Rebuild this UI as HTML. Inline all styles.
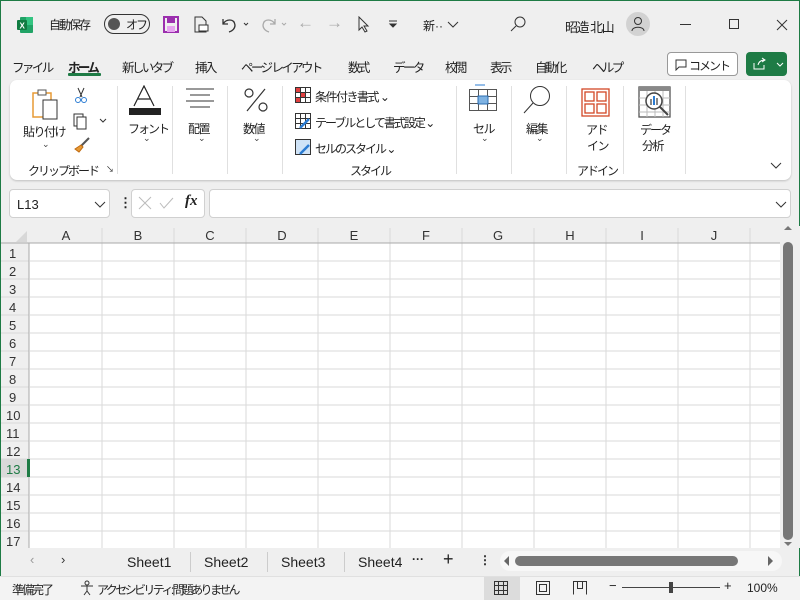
<!DOCTYPE html>
<html><head><meta charset="utf-8"><style>
*{box-sizing:border-box;margin:0;padding:0}
body{width:800px;height:600px;overflow:hidden;background:#efefef;font-family:"Liberation Sans","Noto Sans CJK JP",sans-serif;font-size:12px;color:#222;position:relative}
.a{position:absolute;white-space:nowrap}
.j{letter-spacing:-1.5px}
.win{position:absolute;left:0;top:0;width:800px;height:600px;border:1px solid #1e7b45;border-bottom:none}
.tab{position:absolute;top:57px;font-size:12.5px;letter-spacing:-2.6px}
.sep{position:absolute;top:86px;width:1px;height:88px;background:#e0e0e0}
.lbl{font-size:12px;text-align:center;letter-spacing:-1.5px}
.chev{font-size:9px;color:#444}
</style></head><body>
<div class="win"></div>
<svg class="a" style="left:16px;top:16px" width="18" height="18"><rect x="4" y="1" width="13" height="16" rx="1" fill="#21a366"/><rect x="10" y="1" width="7" height="8" fill="#33c481"/><rect x="1" y="4" width="10" height="10" rx="1" fill="#107c41"/><text x="3.5" y="12.5" font-size="8" fill="#fff" font-weight="bold" font-family="Liberation Sans">X</text></svg>
<div class="a j" style="left:49px;top:16px;font-size:12px;letter-spacing:-2px">自動保存</div>
<div class="a" style="left:104px;top:14px;width:46px;height:20px;border:1px solid #333;border-radius:10px"></div>
<div class="a" style="left:108px;top:18px;width:12px;height:12px;border-radius:6px;background:#555"></div>
<div class="a" style="left:126px;top:16px;font-size:12px;letter-spacing:-2px">オフ</div>
<svg class="a" style="left:163px;top:16px" width="16" height="18"><rect x="1" y="1" width="14" height="15" fill="none" stroke="#9b2fae" stroke-width="2"/><rect x="4" y="2" width="8" height="5" fill="#9b2fae"/><rect x="4" y="10" width="8" height="6" fill="#e7a3f0"/></svg>
<svg class="a" style="left:193px;top:16px" width="16" height="18"><path d="M2 1h7l4 4v11H2z" fill="none" stroke="#333"/><rect x="6" y="9" width="9" height="6" fill="#fff" stroke="#333"/></svg>
<svg class="a" style="left:220px;top:15px" width="30" height="20"><path d="M3 4v5h5M3 9c3-5 11-6 12 1 0 4-3 6-6 7" fill="none" stroke="#333" stroke-width="1.3"/><path d="M24 8l2 2 2-2" fill="none" stroke="#333"/></svg>
<svg class="a" style="left:260px;top:15px" width="30" height="20"><path d="M15 4v5h-5M15 9c-3-5-11-6-12 1 0 4 3 6 6 7" fill="none" stroke="#aaa" stroke-width="1.3"/><path d="M22 8l2 2 2-2" fill="none" stroke="#aaa"/></svg>
<div class="a" style="left:297px;top:13px;font-size:17px;color:#aaa">←</div>
<div class="a" style="left:326px;top:13px;font-size:17px;color:#aaa">→</div>
<svg class="a" style="left:357px;top:16px" width="14" height="18"><path d="M2 1v13l3-3 3 5 2-1-3-5h4z" fill="none" stroke="#333"/></svg>
<svg class="a" style="left:388px;top:20px" width="10" height="10"><path d="M1 1h8M2 4l3 3 3-3z" stroke="#333" fill="#333"/></svg>
<div class="a" style="left:423px;top:17px">新··</div>
<svg class="a" style="left:447px;top:21px" width="12" height="8"><path d="M1 1l5 5 5-5" fill="none" stroke="#333"/></svg>
<svg class="a" style="left:509px;top:15px" width="18" height="18"><circle cx="11" cy="7" r="5" fill="none" stroke="#333"/><path d="M7 11l-5 5" stroke="#333"/></svg>
<div class="a" style="left:565px;top:17px;font-size:13px;letter-spacing:-1.5px">昭造 北山</div>
<div class="a" style="left:626px;top:12px;width:24px;height:24px;border-radius:12px;background:#d2d2d2"></div>
<svg class="a" style="left:630px;top:16px" width="16" height="16"><circle cx="8" cy="5" r="3.5" fill="none" stroke="#333"/><path d="M2 15c0-5 12-5 12 0" fill="none" stroke="#333"/></svg>
<div class="a" style="left:680px;top:24px;width:11px;height:1px;background:#333"></div>
<div class="a" style="left:729px;top:19px;width:10px;height:10px;border:1px solid #333"></div>
<svg class="a" style="left:776px;top:19px" width="12" height="12"><path d="M1 1l10 10M11 1L1 11" stroke="#333"/></svg>
<div class="tab" style="left:12px">ファイル</div>
<div class="tab" style="left:68px;font-weight:bold">ホーム</div>
<div class="a" style="left:68px;top:73px;width:33px;height:3px;background:#1e7b45;border-radius:1px"></div>
<div class="tab" style="left:122px">新しいタブ</div>
<div class="tab" style="left:195px">挿入</div>
<div class="tab" style="left:241px">ページ レイアウト</div>
<div class="tab" style="left:348px">数式</div>
<div class="tab" style="left:393px">データ</div>
<div class="tab" style="left:445px">校閲</div>
<div class="tab" style="left:490px">表示</div>
<div class="tab" style="left:535px">自動化</div>
<div class="tab" style="left:592px">ヘルプ</div>
<div class="a" style="left:667px;top:52px;width:71px;height:24px;border:1px solid #999;border-radius:4px;background:#fff"></div>
<svg class="a" style="left:675px;top:59px" width="12" height="12"><path d="M1 1h10v7H4l-3 3z" fill="none" stroke="#333"/></svg>
<div class="a" style="left:689px;top:57px;font-size:12px;letter-spacing:-2px">コメント</div>
<div class="a" style="left:746px;top:52px;width:41px;height:24px;border-radius:4px;background:#1e7b45"></div>
<svg class="a" style="left:752px;top:57px" width="32" height="14"><path d="M2 6v6h10V8M6 8c1-4 4-5 7-5M10 1l3 2-3 2" fill="none" stroke="#fff"/><path d="M25 6l3 3 3-3" fill="none" stroke="#fff"/></svg>
<div class="a" style="left:10px;top:80px;width:781px;height:100px;background:#fff;border-radius:7px;box-shadow:0 1px 2px rgba(0,0,0,.2)"></div>
<svg class="a" style="left:32px;top:87px" width="30" height="33"><rect x="1" y="6" width="18" height="24" fill="#fff" stroke="#e79a35" stroke-width="1.5"/><rect x="6" y="3" width="8" height="5" fill="#fff" stroke="#555"/><rect x="11" y="13" width="14" height="19" fill="#fff" stroke="#333"/></svg>
<div class="a lbl" style="left:23px;top:123px">貼り付け</div>
<div class="a chev" style="left:42px;top:139px">⌄</div>
<svg class="a" style="left:74px;top:87px" width="14" height="17"><path d="M4 1l4 9M10 1L6 10" stroke="#333"/><circle cx="4" cy="13" r="2.5" fill="none" stroke="#2b7cd3"/><circle cx="10" cy="13" r="2.5" fill="none" stroke="#2b7cd3"/></svg>
<svg class="a" style="left:73px;top:113px" width="34" height="17"><rect x="1" y="1" width="9" height="12" fill="none" stroke="#333"/><rect x="4" y="4" width="9" height="12" fill="#fff" stroke="#333"/><path d="M27 6l3 3 3-3" fill="none" stroke="#333"/></svg>
<svg class="a" style="left:73px;top:137px" width="18" height="16"><path d="M16 1l-8 8" stroke="#555" stroke-width="2"/><path d="M8 8l-6 4 4 3 4-5z" fill="#e79a35" stroke="#c06a10"/></svg>
<div class="a lbl" style="left:28px;top:162px;letter-spacing:-2px">クリップボード</div>
<div class="a" style="left:106px;top:164px;font-size:8px">↘</div>
<div class="sep" style="left:117px"></div>
<svg class="a" style="left:129px;top:85px" width="32" height="32"><path d="M5 21L15 1l10 20M9 14h12" fill="none" stroke="#222" stroke-width="1.2"/><rect x="0" y="23" width="32" height="7" fill="#222"/></svg>
<div class="a lbl" style="left:128px;top:120px;letter-spacing:-2px">フォント</div>
<div class="a chev" style="left:143px;top:133px">⌄</div>
<div class="sep" style="left:172px"></div>
<svg class="a" style="left:186px;top:88px" width="30" height="22"><path d="M0 1h28M4 7h20M0 13h28M4 19h20" stroke="#333"/></svg>
<div class="a lbl" style="left:188px;top:120px">配置</div>
<div class="a chev" style="left:198px;top:133px">⌄</div>
<div class="sep" style="left:227px"></div>
<svg class="a" style="left:243px;top:87px" width="26" height="26"><circle cx="6" cy="6" r="4" fill="none" stroke="#333" stroke-width="1.2"/><circle cx="20" cy="20" r="4" fill="none" stroke="#333" stroke-width="1.2"/><path d="M22 2L4 24" stroke="#333" stroke-width="1.2"/></svg>
<div class="a lbl" style="left:243px;top:120px">数値</div>
<div class="a chev" style="left:253px;top:133px">⌄</div>
<div class="sep" style="left:282px"></div>
<svg class="a" style="left:295px;top:87px" width="16" height="16"><rect x=".5" y=".5" width="15" height="15" fill="#fff" stroke="#333"/><path d="M.5 5.5h15M.5 10.5h15M5.5 .5v15M10.5 .5v15" stroke="#333"/><rect x="1" y="1" width="4" height="4" fill="#e04040"/><rect x="6" y="6" width="4" height="4" fill="#e04040"/><rect x="1" y="11" width="4" height="4" fill="#e04040"/></svg>
<div class="a j" style="left:315px;top:88px">条件付き書式 ⌄</div>
<svg class="a" style="left:295px;top:113px" width="16" height="16"><rect x=".5" y=".5" width="15" height="15" fill="#fff" stroke="#333"/><path d="M.5 5.5h15M5.5 .5v15M10.5 .5v15M.5 10.5h15" stroke="#333"/><path d="M5 15l9-9" stroke="#2b7cd3" stroke-width="2.5"/></svg>
<div class="a j" style="left:315px;top:114px;letter-spacing:-2px">テーブルとして書式設定 ⌄</div>
<svg class="a" style="left:295px;top:139px" width="16" height="16"><rect x=".5" y=".5" width="15" height="15" fill="#cfe3f7" stroke="#333"/><path d="M5 15l9-9" stroke="#2b7cd3" stroke-width="2.5"/></svg>
<div class="a j" style="left:315px;top:140px;letter-spacing:-2px">セルのスタイル ⌄</div>
<div class="a lbl" style="left:350px;top:162px;letter-spacing:-2px">スタイル</div>
<div class="sep" style="left:456px"></div>
<svg class="a" style="left:468px;top:83px" width="32" height="29"><path d="M7 2h10" stroke="#2b7cd3"/><rect x="1.5" y="6.5" width="27" height="21" fill="#fff" stroke="#555"/><path d="M1.5 13.5h27M1.5 20.5h27M10.5 6.5v21M19.5 6.5v21" stroke="#555"/><rect x="10" y="13" width="10" height="8" fill="#7fb3e3" stroke="#2b6cb0"/></svg>
<div class="a lbl" style="left:473px;top:120px">セル</div>
<div class="a chev" style="left:481px;top:133px">⌄</div>
<div class="sep" style="left:511px"></div>
<svg class="a" style="left:523px;top:85px" width="30" height="30"><circle cx="17" cy="11" r="9.5" fill="none" stroke="#333"/><path d="M10 18L1 28" stroke="#333"/></svg>
<div class="a lbl" style="left:526px;top:120px">編集</div>
<div class="a chev" style="left:536px;top:133px">⌄</div>
<div class="sep" style="left:566px"></div>
<svg class="a" style="left:581px;top:88px" width="29" height="29"><rect x="1" y="1" width="27" height="27" fill="none" stroke="#d24726" stroke-width="1.3"/><rect x="4" y="4" width="9" height="9" fill="none" stroke="#d24726" stroke-width="1.3"/><rect x="16" y="4" width="9" height="9" fill="none" stroke="#d24726" stroke-width="1.3"/><rect x="4" y="16" width="9" height="9" fill="none" stroke="#d24726" stroke-width="1.3"/><rect x="16" y="16" width="9" height="9" fill="none" stroke="#d24726" stroke-width="1.3"/></svg>
<div class="a lbl" style="left:586px;top:121px">アド</div>
<div class="a lbl" style="left:587px;top:137px">イン</div>
<div class="a lbl" style="left:577px;top:162px;letter-spacing:-2px">アドイン</div>
<div class="sep" style="left:623px"></div>
<svg class="a" style="left:638px;top:86px" width="33" height="32"><rect x="1" y="1" width="31" height="30" fill="#fff" stroke="#555" stroke-width="1.3"/><rect x="1" y="1" width="31" height="4" fill="#888"/><path d="M1 12h31M1 19h31M1 26h31M9 5v26M17 5v26M25 5v26" stroke="#bbb"/><circle cx="16" cy="15" r="8" fill="#fff" stroke="#444" stroke-width="1.5"/><rect x="12" y="13" width="2" height="6" fill="#888"/><rect x="15" y="10" width="2" height="9" fill="#2b7cd3"/><rect x="18" y="12" width="2" height="7" fill="#888"/><path d="M22 21l8 8" stroke="#444" stroke-width="2"/></svg>
<div class="a lbl" style="left:640px;top:121px;letter-spacing:-2px">データ</div>
<div class="a lbl" style="left:642px;top:137px">分析</div>
<div class="sep" style="left:685px"></div>
<svg class="a" style="left:770px;top:162px" width="12" height="8"><path d="M1 1l5 5 5-5" fill="none" stroke="#333"/></svg>
<div class="a" style="left:9px;top:189px;width:101px;height:29px;background:#fff;border:1px solid #d0d0d0;border-radius:4px"></div>
<div class="a" style="left:17px;top:197px;font-size:13px">L13</div>
<svg class="a" style="left:94px;top:201px" width="12" height="8"><path d="M1 1l5 5 5-5" fill="none" stroke="#333"/></svg>
<div class="a" style="left:119px;top:195px;font-size:13px;font-weight:bold">⋮</div>
<div class="a" style="left:131px;top:189px;width:74px;height:29px;background:#fff;border:1px solid #d0d0d0;border-radius:4px"></div>
<svg class="a" style="left:138px;top:196px" width="40" height="14"><path d="M1 1l12 12M13 1L1 13" stroke="#bbb"/><path d="M22 7l4 5 9-10" fill="none" stroke="#bbb"/></svg>
<div class="a" style="left:185px;top:193px;font-family:'Liberation Serif',serif;font-style:italic;font-weight:bold;font-size:15px">fx</div>
<div class="a" style="left:209px;top:189px;width:582px;height:29px;background:#fff;border:1px solid #d0d0d0;border-radius:4px"></div>
<svg class="a" style="left:775px;top:201px" width="12" height="8"><path d="M1 1l5 5 5-5" fill="none" stroke="#333"/></svg>
<svg class="a" style="left:0;top:226px" width="800" height="322">
<rect x="1" y="0" width="779" height="322" fill="#fff"/>
<rect x="1" y="0" width="779" height="17" fill="#efefef"/>
<rect x="1" y="0" width="28" height="322" fill="#efefef"/>
<path d="M16 16h11V5z" fill="#d8d8d8"/>
<g stroke="#dadada">
<path d="M102 17V322M174 17V322M246 17V322M318 17V322M390 17V322M462 17V322M534 17V322M606 17V322M678 17V322M750 17V322"/>
<path d="M30 35H780M30 53H780M30 71H780M30 89H780M30 107H780M30 125H780M30 143H780M30 161H780M30 179H780M30 197H780M30 215H780M30 233H780M30 251H780M30 269H780M30 287H780M30 305H780"/>
<path d="M102 2V17M174 2V17M246 2V17M318 2V17M390 2V17M462 2V17M534 2V17M606 2V17M678 2V17M750 2V17" />
<path d="M1 35H29M1 53H29M1 71H29M1 89H29M1 107H29M1 125H29M1 143H29M1 161H29M1 179H29M1 197H29M1 215H29M1 233H29M1 251H29M1 269H29M1 287H29M1 305H29"/>
</g>
<path d="M1 17H780M29 17V322" stroke="#aaa"/>
<rect x="1" y="233" width="28" height="18" fill="#d9d9d9"/>
<rect x="27" y="233" width="3" height="18" fill="#1e7b45"/>
<g font-family="Liberation Sans" font-size="13" fill="#333" text-anchor="middle">
<text x="66" y="14">A</text><text x="138" y="14">B</text><text x="210" y="14">C</text><text x="282" y="14">D</text><text x="354" y="14">E</text><text x="426" y="14">F</text><text x="498" y="14">G</text><text x="570" y="14">H</text><text x="642" y="14">I</text><text x="714" y="14">J</text>
</g>
<g font-family="Liberation Sans" font-size="13" fill="#333">
<text x="9" y="32">1</text><text x="9" y="50">2</text><text x="9" y="68">3</text><text x="9" y="86">4</text><text x="9" y="104">5</text><text x="9" y="122">6</text><text x="9" y="140">7</text><text x="9" y="158">8</text><text x="9" y="176">9</text><text x="6" y="194">10</text><text x="6" y="212">11</text><text x="6" y="230">12</text><text x="6" y="248" fill="#1e7b45">13</text><text x="6" y="266">14</text><text x="6" y="284">15</text><text x="6" y="302">16</text><text x="6" y="320">17</text>
</g>
<rect x="780" y="0" width="20" height="322" fill="#efefef"/>
<rect x="783" y="16" width="10" height="298" rx="5" fill="#777"/>
<path d="M784 4l4-4 4 4z M784 316l4 4 4-4z" fill="#777"/>
</svg>
<div class="a" style="left:30px;top:552px;color:#999;font-size:13px">‹</div>
<div class="a" style="left:61px;top:552px;color:#333;font-size:13px">›</div>
<div class="a" style="left:127px;top:554px;font-size:14px">Sheet1</div>
<div class="a" style="left:190px;top:552px;width:1px;height:20px;background:#ccc"></div>
<div class="a" style="left:204px;top:554px;font-size:14px">Sheet2</div>
<div class="a" style="left:267px;top:552px;width:1px;height:20px;background:#ccc"></div>
<div class="a" style="left:281px;top:554px;font-size:14px">Sheet3</div>
<div class="a" style="left:344px;top:552px;width:1px;height:20px;background:#ccc"></div>
<div class="a" style="left:358px;top:554px;font-size:14px">Sheet4</div>
<div class="a" style="left:412px;top:552px;font-weight:bold">···</div>
<div class="a" style="left:443px;top:549px;font-size:18px">+</div>
<div class="a" style="left:479px;top:553px;font-weight:bold">⋮</div>
<div class="a" style="left:500px;top:551px;width:282px;height:20px;border-radius:10px;background:#f7f7f7"></div>
<svg class="a" style="left:503px;top:555px" width="8" height="12"><path d="M6 1L1 6l5 5z" fill="#666"/></svg>
<div class="a" style="left:515px;top:556px;width:223px;height:10px;border-radius:5px;background:#777"></div>
<svg class="a" style="left:767px;top:555px" width="8" height="12"><path d="M1 1l5 5-5 5z" fill="#666"/></svg>
<div class="a" style="left:0;top:576px;width:800px;height:24px;background:#f3f3f3;border-top:1px solid #e0e0e0"></div>
<div class="a" style="left:12px;top:581px;font-size:12px;letter-spacing:-2px">準備完了</div>
<svg class="a" style="left:80px;top:580px" width="14" height="16"><circle cx="7" cy="3" r="2" fill="none" stroke="#333"/><path d="M1 6h12M7 6v5l-3 4M7 11l3 4" fill="none" stroke="#333"/></svg>
<div class="a" style="left:97px;top:581px;font-size:12px;letter-spacing:-2.6px">アクセシビリティ: 問題ありません</div>
<div class="a" style="left:484px;top:577px;width:36px;height:23px;background:#dcdcdc"></div>
<svg class="a" style="left:494px;top:581px" width="14" height="14"><rect x=".5" y=".5" width="13" height="13" fill="none" stroke="#333"/><path d="M.5 4.5h13M.5 9.5h13M4.5 .5v13M9.5 .5v13" stroke="#333"/></svg>
<svg class="a" style="left:536px;top:581px" width="14" height="14"><rect x=".5" y=".5" width="13" height="13" fill="none" stroke="#333"/><rect x="3.5" y="3.5" width="7" height="7" fill="none" stroke="#333"/></svg>
<svg class="a" style="left:573px;top:581px" width="14" height="14"><path d="M.5 13.5V.5h13v13M4.5 .5v7h5v-7" fill="none" stroke="#333"/></svg>
<div class="a" style="left:609px;top:578px;font-size:13px">−</div>
<div class="a" style="left:622px;top:587px;width:98px;height:1px;background:#444"></div>
<div class="a" style="left:669px;top:582px;width:4px;height:11px;background:#444"></div>
<div class="a" style="left:724px;top:578px;font-size:13px">+</div>
<div class="a" style="left:747px;top:581px;font-size:12px">100%</div>
</body></html>
